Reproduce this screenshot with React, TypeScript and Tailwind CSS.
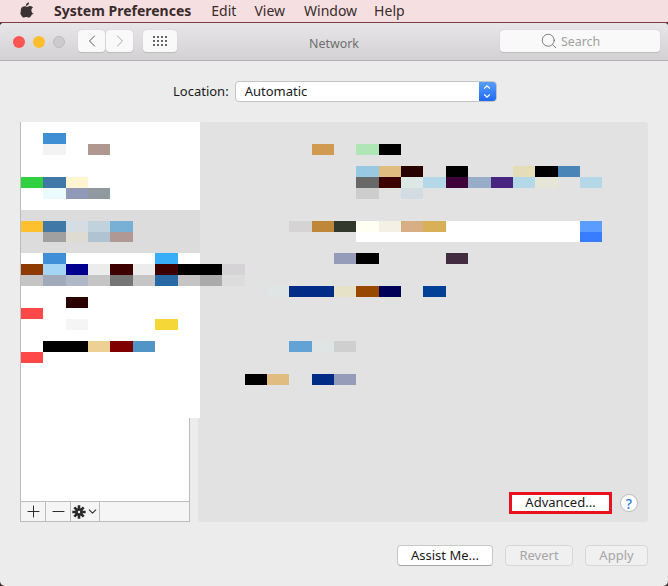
import React from 'react';
import { ChevronLeft, ChevronRight, ChevronDown, ChevronUp, Search, Plus, Minus } from 'lucide-react';

const FONT = 'font-["Noto_Sans",sans-serif]';

// blurred-out blocks of the original list and details: [column, row, span, colour]
const tiles: [number, number, number, string][] = [
  [1, 1, 1, '#3f8fd5'],
  [1, 2, 1, '#f3f3f3'],
  [3, 2, 1, '#b09890'],
  [0, 5, 1, '#30d040'],
  [1, 5, 1, '#4078a8'],
  [2, 5, 1, '#fff5d0'],
  [1, 6, 1, '#ebfbff'],
  [2, 6, 1, '#909ab8'],
  [3, 6, 1, '#9098a0'],
  [0, 9, 1, '#ffc030'],
  [1, 9, 1, '#4078a8'],
  [2, 9, 1, '#d5dde3'],
  [3, 9, 1, '#c0d3dd'],
  [4, 9, 1, '#78b0d5'],
  [1, 10, 1, '#a0a0a0'],
  [2, 10, 1, '#dedbd3'],
  [3, 10, 1, '#b0c3d3'],
  [4, 10, 1, '#b09895'],
  [1, 12, 1, '#3f8fd8'],
  [6, 12, 1, '#38aef8'],
  [0, 13, 1, '#8e3a00'],
  [1, 13, 1, '#a5d5f5'],
  [2, 13, 1, '#00008e'],
  [3, 13, 1, '#ececec'],
  [4, 13, 1, '#3d0000'],
  [5, 13, 1, '#ececec'],
  [6, 13, 1, '#3d0000'],
  [7, 13, 2, '#000000'],
  [9, 13, 1, '#d5d3d5'],
  [0, 14, 1, '#c5c5c5'],
  [1, 14, 1, '#a0aabb'],
  [2, 14, 1, '#b0b8c8'],
  [3, 14, 1, '#c5c5c5'],
  [4, 14, 1, '#757575'],
  [5, 14, 1, '#c5c5c5'],
  [6, 14, 1, '#2868a5'],
  [7, 14, 1, '#c5c5c5'],
  [8, 14, 1, '#aaaaaa'],
  [9, 14, 1, '#dcdcdc'],
  [2, 16, 1, '#2a0000'],
  [0, 17, 1, '#ff4848'],
  [2, 18, 1, '#f5f5f5'],
  [6, 18, 1, '#f5d838'],
  [1, 20, 2, '#000000'],
  [3, 20, 1, '#eed095'],
  [4, 20, 1, '#800000'],
  [5, 20, 1, '#5095c5'],
  [0, 21, 1, '#ff4848'],
  [13, 2, 1, '#d09a50'],
  [15, 2, 1, '#b0e5b5'],
  [16, 2, 1, '#000000'],
  [15, 4, 1, '#98c8e2'],
  [16, 4, 1, '#e0bc80'],
  [17, 4, 1, '#280000'],
  [19, 4, 1, '#000000'],
  [22, 4, 1, '#e5ddb8'],
  [23, 4, 1, '#000000'],
  [24, 4, 1, '#4a85b8'],
  [15, 5, 1, '#686868'],
  [16, 5, 1, '#3d0000'],
  [17, 5, 1, '#dce8e5'],
  [18, 5, 1, '#b5d8e8'],
  [19, 5, 1, '#3d0038'],
  [20, 5, 1, '#98aec8'],
  [21, 5, 1, '#482580'],
  [22, 5, 1, '#b5d8e8'],
  [23, 5, 1, '#e5e5d8'],
  [25, 5, 1, '#b5d8e8'],
  [15, 6, 1, '#cdcdcd'],
  [17, 6, 1, '#d3dbe3'],
  [12, 9, 1, '#d5d3d3'],
  [13, 9, 1, '#be8838'],
  [14, 9, 1, '#33382c'],
  [15, 9, 1, '#fffff2'],
  [16, 9, 1, '#f5f0e5'],
  [17, 9, 1, '#d8ae85'],
  [18, 9, 1, '#d8b058'],
  [19, 9, 6, '#ffffff'],
  [25, 9, 1, '#5a9cff'],
  [15, 10, 10, '#ffffff'],
  [25, 10, 1, '#387cff'],
  [14, 12, 1, '#949cba'],
  [15, 12, 1, '#000000'],
  [19, 12, 1, '#432c42'],
  [11, 15, 1, '#dfe5e5'],
  [12, 15, 2, '#002c88'],
  [14, 15, 1, '#e6e2c8'],
  [15, 15, 1, '#984800'],
  [16, 15, 1, '#000058'],
  [18, 15, 1, '#004098'],
  [12, 20, 1, '#62a2d4'],
  [13, 20, 1, '#dfe5e5'],
  [14, 20, 1, '#d0cfd0'],
  [10, 23, 1, '#000000'],
  [11, 23, 1, '#e0bc80'],
  [13, 23, 1, '#002c88'],
  [14, 23, 1, '#949cba'],
];

const Mosaic = () => (
  <div className="absolute left-[21px] top-[122px] grid grid-cols-[repeat(26,22.36px)] auto-rows-[10.96px]">
    <div className="bg-white col-start-1 col-end-9 row-start-1 row-end-28" />
    <div className="bg-[#dcdcdc] col-start-1 col-end-9 row-start-9 row-end-13" />
    {tiles.map(([col, row, span, colour]) => (
      <div
        key={`${col}-${row}`}
        style={{
          gridColumn: `${col + 1} / span ${span}`,
          gridRow: `${row + 1}`,
          backgroundColor: colour,
        }}
      />
    ))}
  </div>
);

const AppleLogo = () => (
  <svg viewBox="22 0 150 170" className="w-[16px] h-[18px] fill-[#3a3233]">
    <path d="M150.400 130.300c-2.400 5.500-5.200 10.600-8.500 15.300-4.500 6.400-8.100 10.800-11 13.300-4.400 4-9.100 6.100-14.100 6.200-3.600 0-8-1-13.100-3.100-5.100-2.100-9.800-3.100-14.100-3.100-4.500 0-9.300 1-14.500 3.100-5.200 2.100-9.300 3.200-12.500 3.300-4.800.2-9.600-1.900-14.400-6.400-3.100-2.700-6.900-7.300-11.500-13.900-4.900-6.900-9-15-12.100-24.100C31.700 111.100 30 101.300 30 91.900c0-10.800 2.300-20.100 7-27.900 3.700-6.300 8.600-11.300 14.700-14.900 6.100-3.700 12.800-5.500 19.900-5.600 3.900 0 9 1.200 15.300 3.600 6.300 2.400 10.400 3.600 12.100 3.600 1.300 0 5.900-1.400 13.600-4.300 7.300-2.600 13.400-3.700 18.500-3.300 13.700 1.100 23.900 6.500 30.700 16.200-12.200 7.400-18.200 17.800-18.100 31.100.1 10.400 3.900 19 11.300 25.800 3.400 3.200 7.100 5.700 11.300 7.400-.9 2.600-1.900 5.100-2.900 7.500zM119.100 7.200c0 8.100-3 15.700-8.900 22.700-7.200 8.300-15.800 13.100-25.200 12.400-.1-1-.2-2-.2-3.100 0-7.800 3.400-16.100 9.400-22.900 3-3.400 6.800-6.300 11.400-8.600 4.600-2.200 9-3.500 13.100-3.700.1 1.100.2 2.100.2 3.200z" />
  </svg>
);

const Light = ({ colour }: { colour: string }) => (
  <span className={`w-3 h-3 rounded-full ${colour}`} />
);

const ToolButton = ({ className, children }: { className: string; children: React.ReactNode }) => (
  <div className={`h-[23px] bg-[#f9f9f9] rounded-[4px] border-b border-[#bdbdbd] shadow-[0_0_1px_#bbb] flex items-center justify-center ${className}`}>
    {children}
  </div>
);

const Footer = ({ label, className, disabled }: { label: string; className: string; disabled?: boolean }) => (
  <button
    className={`h-[21px] rounded-[4px] text-[13px] leading-none flex items-center justify-center ${className} ${
      disabled
        ? 'bg-[#f0f0f0] text-[#a5a5a5] border border-[#d8d8d8]'
        : 'bg-white text-[#1a1a1a] border border-[#c8c8c8] border-b-[#a5a5a5]'
    }`}
  >
    {label}
  </button>
);

const GridIcon = () => (
  <div className="grid grid-cols-4 gap-x-[2px] gap-y-[2px]">
    {Array.from({ length: 12 }).map((_, i) => (
      <span key={i} className="w-[2px] h-[2px] bg-[#666]" />
    ))}
  </div>
);

const Gear = () => (
  <svg viewBox="0 0 14 14" className="w-[14px] h-[14px]">
    <circle cx="7" cy="7" r="3.800" fill="#2b2b2b" />
    <path
      d="M7 .3v13.400M.3 7h13.400M2.300 2.300l9.400 9.400M11.700 2.300l-9.400 9.400"
      stroke="#2b2b2b"
      strokeWidth="2.600"
    />
    <circle cx="7" cy="7" r="1.200" fill="#f5f5f5" />
  </svg>
);

export default function App() {
  return (
    <div className={`relative w-[668px] h-[586px] overflow-hidden bg-[#3a2a2a] flex flex-col ${FONT}`}>
      {/* menu bar */}
      <div className="h-[23px] shrink-0 bg-[#f5dfe0] border-b border-[#7a3f40] flex items-center pb-[2px] text-[14px] text-[#3a2b2c]">
        <div className="ml-[20px] w-[14px] h-[18px] flex justify-center">
          <AppleLogo />
        </div>
        <span className="ml-[20px] font-bold">System Preferences</span>
        <span className="ml-[20px]">Edit</span>
        <span className="ml-[18px]">View</span>
        <span className="ml-[19px]">Window</span>
        <span className="ml-[17px]">Help</span>
      </div>

      <div className="flex-1 flex flex-col bg-[#ececec] rounded-[5px] rounded-t-[4px] overflow-hidden">
        {/* title bar */}
        <div className="h-[38px] shrink-0 bg-gradient-to-b from-[#e8e6e8] to-[#d3d1d3] border-b border-[#b1b1b1] flex items-center">
          <div className="ml-[13px] flex gap-2">
            <Light colour="bg-[#fc5652]" />
            <Light colour="bg-[#fdbd2f]" />
            <Light colour="bg-[#cdcbcd] border border-[#bdbbbd]" />
          </div>
          <ToolButton className="ml-[13px] w-[27px]">
            <ChevronLeft size={20} strokeWidth={1.2} className="text-[#555]" />
          </ToolButton>
          <ToolButton className="ml-px w-[27px]">
            <ChevronRight size={20} strokeWidth={1.2} className="text-[#aaa]" />
          </ToolButton>
          <ToolButton className="ml-[10px] w-[34px]">
            <GridIcon />
          </ToolButton>
          <span className="flex-1 text-center text-[12.4px] text-[#6f6f6f] pl-[33px] pr-[42px] pt-[5px]">Network</span>
          <ToolButton className="mr-[8px] w-[160px] gap-[3px] pr-[20px] text-[12.4px] text-[#a0a0a0]">
            <Search size={18} strokeWidth={1.1} className="text-[#666]" />
            <span className="pt-[3px]">Search</span>
          </ToolButton>
        </div>

        {/* location */}
        <div className="h-[61px] shrink-0 flex items-center pl-[173px] text-[13px] text-[#1a1a1a]">
          <span>Location:</span>
          <div className="ml-[6px] w-[262px] h-[21px] bg-white rounded-[4px] border border-[#c4c4c4] flex items-center justify-between overflow-hidden">
            <span className="pl-[9px]">Automatic</span>
            <div className="w-[17px] h-[21px] bg-gradient-to-b from-[#5ba0fb] to-[#1d66f1] flex flex-col items-center justify-center text-white">
              <ChevronUp size={10} strokeWidth={2.6} className="-mb-[1px]" />
              <ChevronDown size={10} strokeWidth={2.6} />
            </div>
          </div>
        </div>

        {/* panes */}
        <div className="h-[400px] shrink-0 flex pl-[20px] pr-[20px]">
          <div className="w-[170px] h-[400px] border border-[#bcbcbc] bg-white flex flex-col justify-end">
            <div className="h-[20px] bg-[#f5f5f5] border-t border-[#bcbcbc] flex">
              <div className="w-[25px] border-r border-[#bcbcbc] flex items-center justify-center">
                <Plus size={19} strokeWidth={1.2} className="text-[#222]" />
              </div>
              <div className="w-[25px] border-r border-[#bcbcbc] flex items-center justify-center">
                <Minus size={19} strokeWidth={1.2} className="text-[#222]" />
              </div>
              <div className="w-[29px] border-r border-[#bcbcbc] flex items-center justify-center">
                <Gear />
                <ChevronDown size={13} strokeWidth={2} className="text-[#333]" />
              </div>
            </div>
          </div>
          <div className="ml-[8px] w-[450px] h-[400px] bg-[#e2e2e2] rounded-[3px] flex items-end">
            <div className="mb-[8px] ml-[311px] w-[103px] h-[22px] border-[3px] border-[#e8121f] bg-white flex items-center justify-center text-[13px] text-[#1a1a1a]">
              Advanced...
            </div>
            <div className="mb-[10px] ml-[8px] w-[18px] h-[18px] rounded-full bg-white border border-[#bdbdbd] flex items-center justify-center text-[14px] font-medium text-[#2f78e8]">
              ?
            </div>
          </div>
        </div>

        {/* footer buttons */}
        <div className="flex-1 flex items-start gap-[12px] pl-[397px] pt-[23px]">
          <Footer label="Assist Me..." className="w-[96px]" />
          <Footer label="Revert" className="w-[68px]" disabled />
          <Footer label="Apply" className="w-[63px]" disabled />
        </div>
      </div>

      <Mosaic />
    </div>
  );
}
